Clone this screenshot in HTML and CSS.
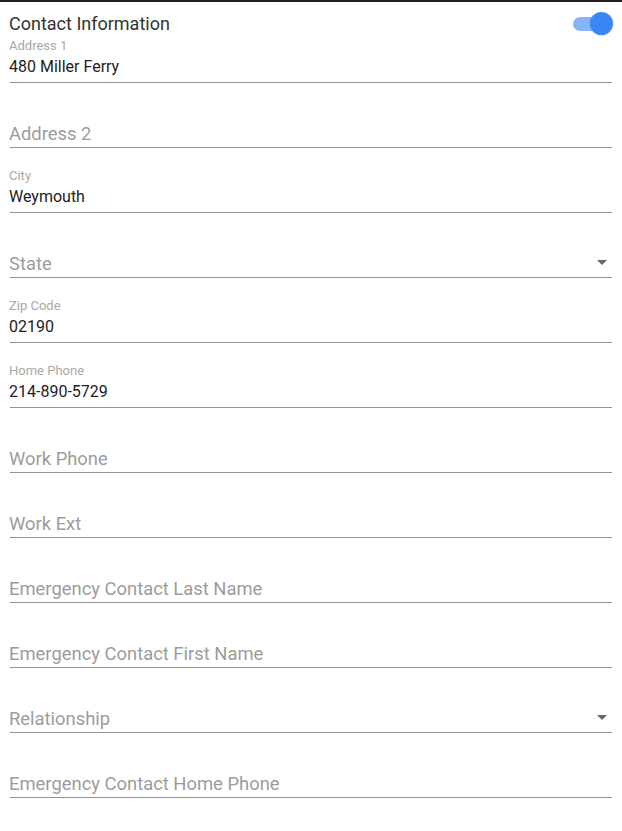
FILE: index.html
```html
<!DOCTYPE html>
<html>
<head>
<meta charset="utf-8">
<link rel="stylesheet" href="styles.css">
</head>
<body>
<div class="topbar"></div>
<div class="form">
  <div class="header">
    <div class="title">Contact Information</div>
    <div class="toggle"><div class="track"></div><div class="thumb"></div></div>
  </div>
  <div class="field first filled">
    <div class="label">Address 1</div>
    <div class="value">480 Miller Ferry</div>
  </div>
  <div class="field">
    <div class="placeholder">Address 2</div>
  </div>
  <div class="field filled">
    <div class="label">City</div>
    <div class="value">Weymouth</div>
  </div>
  <div class="field select">
    <div class="placeholder">State</div>
    <div class="arrow"></div>
  </div>
  <div class="field filled">
    <div class="label">Zip Code</div>
    <div class="value">02190</div>
  </div>
  <div class="field filled">
    <div class="label">Home Phone</div>
    <div class="value">214-890-5729</div>
  </div>
  <div class="field">
    <div class="placeholder">Work Phone</div>
  </div>
  <div class="field">
    <div class="placeholder">Work Ext</div>
  </div>
  <div class="field">
    <div class="placeholder">Emergency Contact Last Name</div>
  </div>
  <div class="field">
    <div class="placeholder">Emergency Contact First Name</div>
  </div>
  <div class="field select">
    <div class="placeholder">Relationship</div>
    <div class="arrow"></div>
  </div>
  <div class="field">
    <div class="placeholder">Emergency Contact Home Phone</div>
  </div>
</div>
</body>
</html>
```

FILE: styles.css
```css
html, body {
  margin: 0;
  padding: 0;
  background: #fff;
  font-family: Roboto, "Liberation Sans", sans-serif;
}
.topbar {
  height: 2px;
  background: #222;
}
.form {
  padding: 0 10px 0 10px;
  width: 602px;
}
.header {
  height: 34px;
  display: flex;
  align-items: center;
  justify-content: space-between;
}
.title {
  font-size: 18px;
  color: #333;
  padding-top: 9px;
  margin-left: -1px;
}
.toggle {
  position: relative;
  width: 42px;
  height: 24px;
  margin-top: 10px;
  margin-right: -1px;
}
.track {
  position: absolute;
  left: 2px;
  top: 5px;
  width: 36px;
  height: 14px;
  border-radius: 7px;
  background: #8ab4f8;
}
.thumb {
  position: absolute;
  right: 0;
  top: 0;
  width: 23px;
  height: 23px;
  border-radius: 50%;
  background: #3b86f6;
  box-shadow: 0 1px 2px rgba(0,0,0,0.15);
}
.field {
  position: relative;
  box-sizing: border-box;
  height: 65px;
  border-bottom: 1px solid #949494;
  display: flex;
  flex-direction: column;
  justify-content: flex-end;
  padding-bottom: 5px;
}
.field.first {
  height: 47px;
}
.label {
  font-size: 13px;
  line-height: 14px;
  color: #a8a8a8;
  margin-bottom: 4px;
  margin-left: -1px;
}
.value {
  font-size: 16px;
  line-height: 20px;
  color: #222;
  margin-left: -1px;
}
.placeholder {
  font-size: 18.4px;
  line-height: 22px;
  color: #9c9c9c;
  margin-bottom: -3px;
  margin-left: -1px;
}
.arrow {
  position: absolute;
  right: 5px;
  bottom: 12px;
  width: 0;
  height: 0;
  border-left: 5px solid transparent;
  border-right: 5px solid transparent;
  border-top: 5px solid #666;
}
```
